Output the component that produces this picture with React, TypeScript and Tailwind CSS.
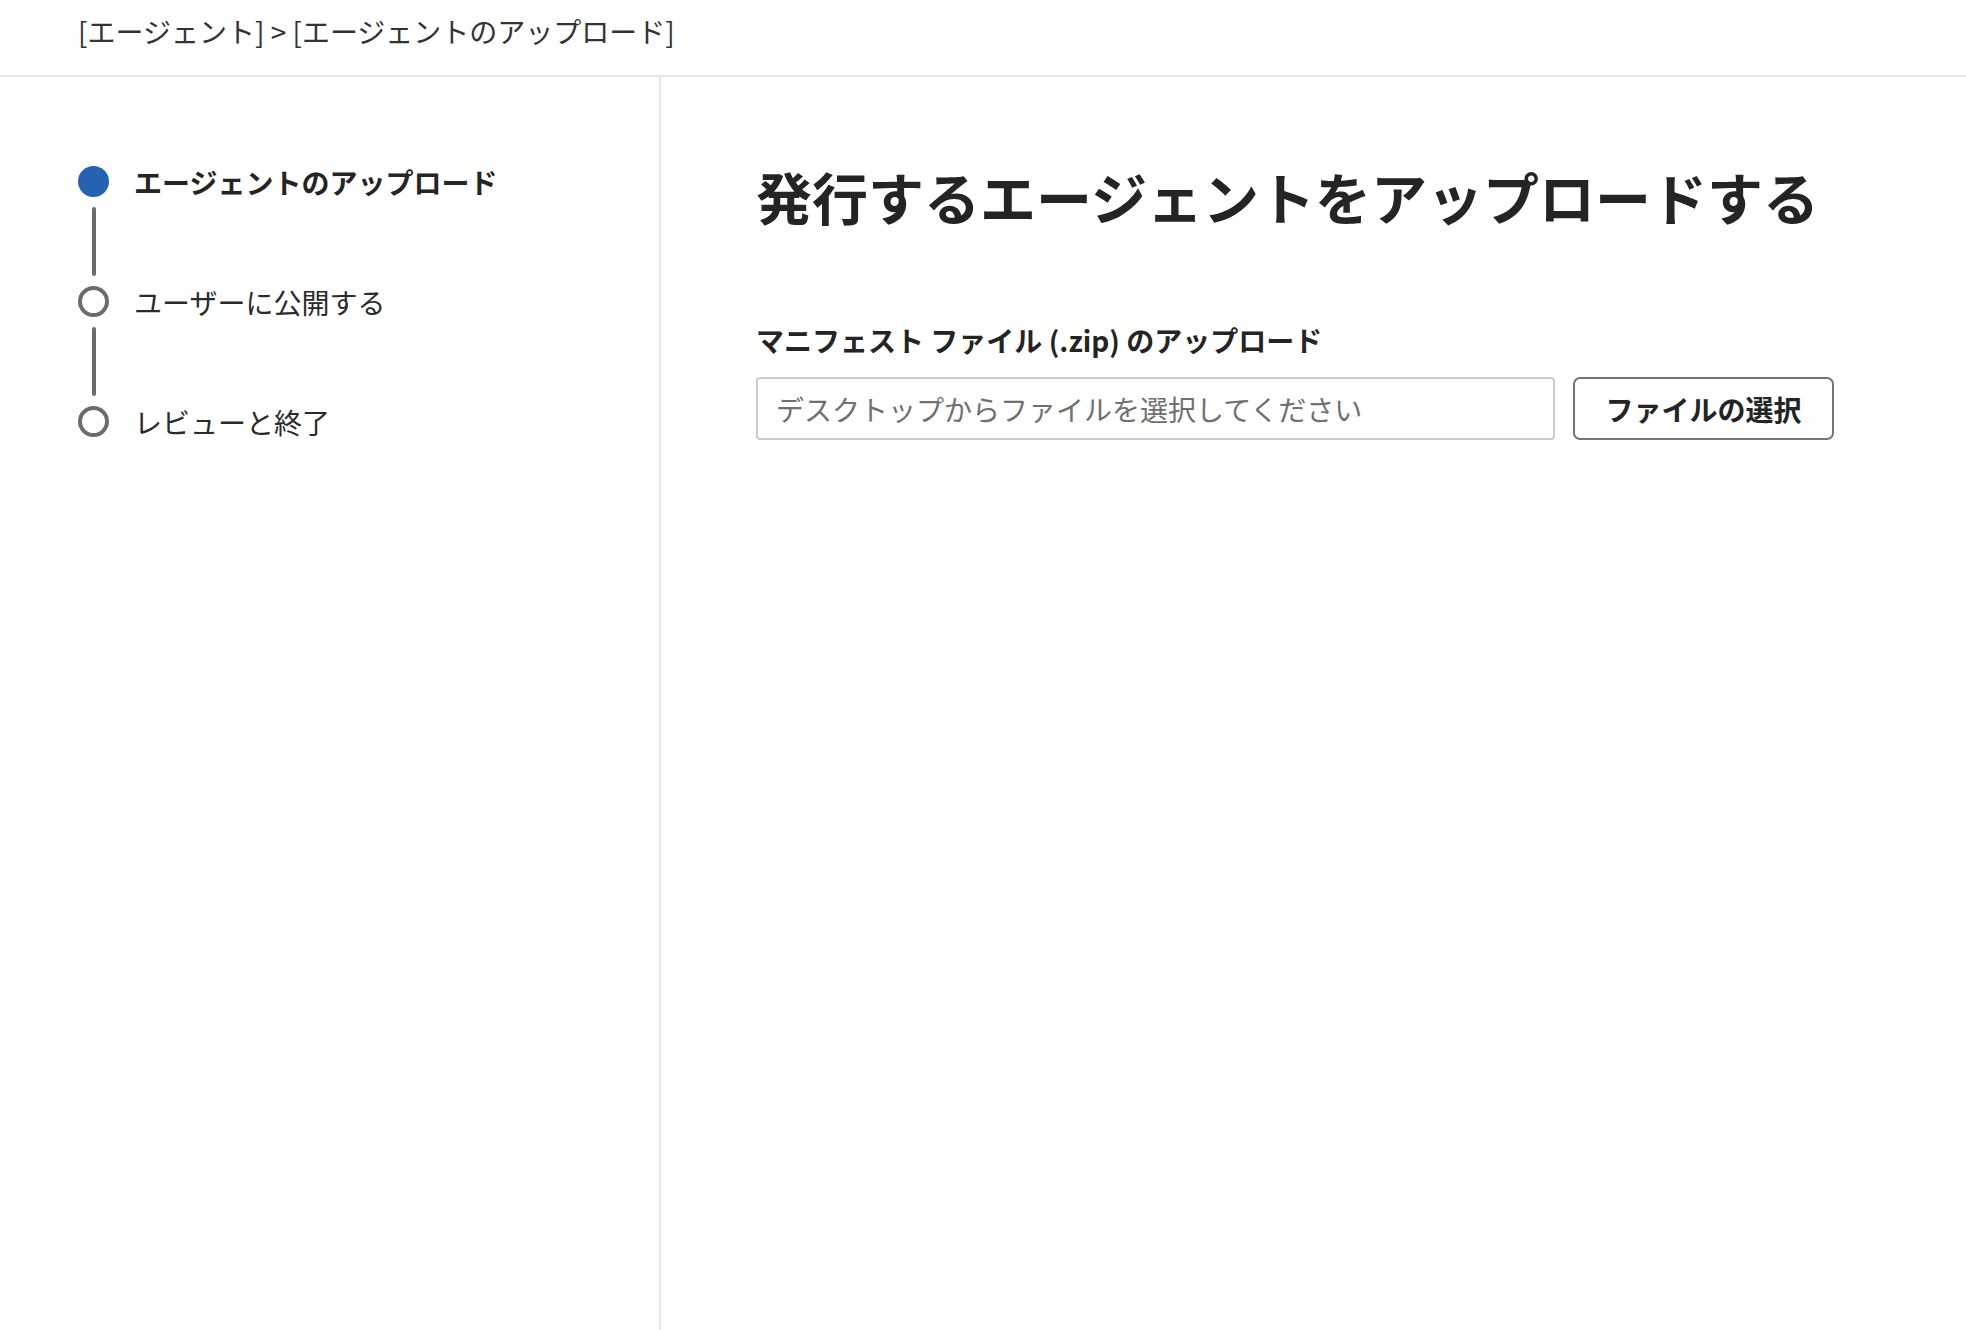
import React from "react";

const font = "font-['Noto_Sans_CJK_JP','Noto_Sans',sans-serif]";

function Step({ label, active }: { label: string; active?: boolean }) {
  return (
    <div className="flex items-center h-[31px]">
      {active ? (
        <div className="w-[31px] h-[31px] rounded-full bg-[#2563b0] shrink-0" />
      ) : (
        <div className="w-[31px] h-[31px] rounded-full border-[4px] border-[#6b6b6b] bg-white shrink-0" />
      )}
      <span
        className={`ml-[25px] text-[28px] leading-none whitespace-nowrap ${
          active ? "font-bold text-[#242424]" : "font-normal text-[#2b2b2b]"
        }`}
      >
        {label}
      </span>
    </div>
  );
}

function Connector() {
  return (
    <div className="w-[31px] flex justify-center py-[10px]">
      <div className="w-[4px] h-[69px] bg-[#6b6b6b] rounded-full" />
    </div>
  );
}

export default function App() {
  return (
    <div className={`${font} bg-white min-h-screen flex flex-col text-[#242424]`}>
      <header className="h-[77px] border-b-[2px] border-[#e8e8e8] pl-[78px] pt-[11px] shrink-0">
        <div className="text-[28px] leading-[40px] text-[#333333] font-normal whitespace-nowrap">
          [エージェント] &gt; [エージェントのアップロード]
        </div>
      </header>
      <div className="flex flex-1">
        <aside className="w-[661px] shrink-0 border-r-[2px] border-[#e6e6e6] pl-[78px] pt-[89px]">
          <Step label="エージェントのアップロード" active />
          <Connector />
          <Step label="ユーザーに公開する" />
          <Connector />
          <Step label="レビューと終了" />
        </aside>
        <main className="flex-1 pl-[95px] pt-[82px]">
          <h1 className="text-[56px] leading-[73px] font-bold text-[#242424] whitespace-nowrap">
            発行するエージェントをアップロードする
          </h1>
          <div className="mt-[88px] text-[28px] leading-[40px] font-bold text-[#242424] whitespace-nowrap">
            マニフェスト ファイル (.zip) のアップロード
          </div>
          <div className="mt-[17px] flex items-center gap-[18px]">
            <input
              type="text"
              readOnly
              placeholder="デスクトップからファイルを選択してください"
              className={`${font} w-[799px] h-[63px] border-[2px] border-[#cccccc] rounded-[4px] px-[18px] text-[28px] text-[#242424] placeholder:text-[#707070] outline-none bg-white`}
            />
            <button
              className={`${font} w-[261px] h-[63px] border-[2px] border-[#757575] rounded-[7px] bg-white text-[28px] font-bold text-[#242424]`}
            >
              ファイルの選択
            </button>
          </div>
        </main>
      </div>
    </div>
  );
}
